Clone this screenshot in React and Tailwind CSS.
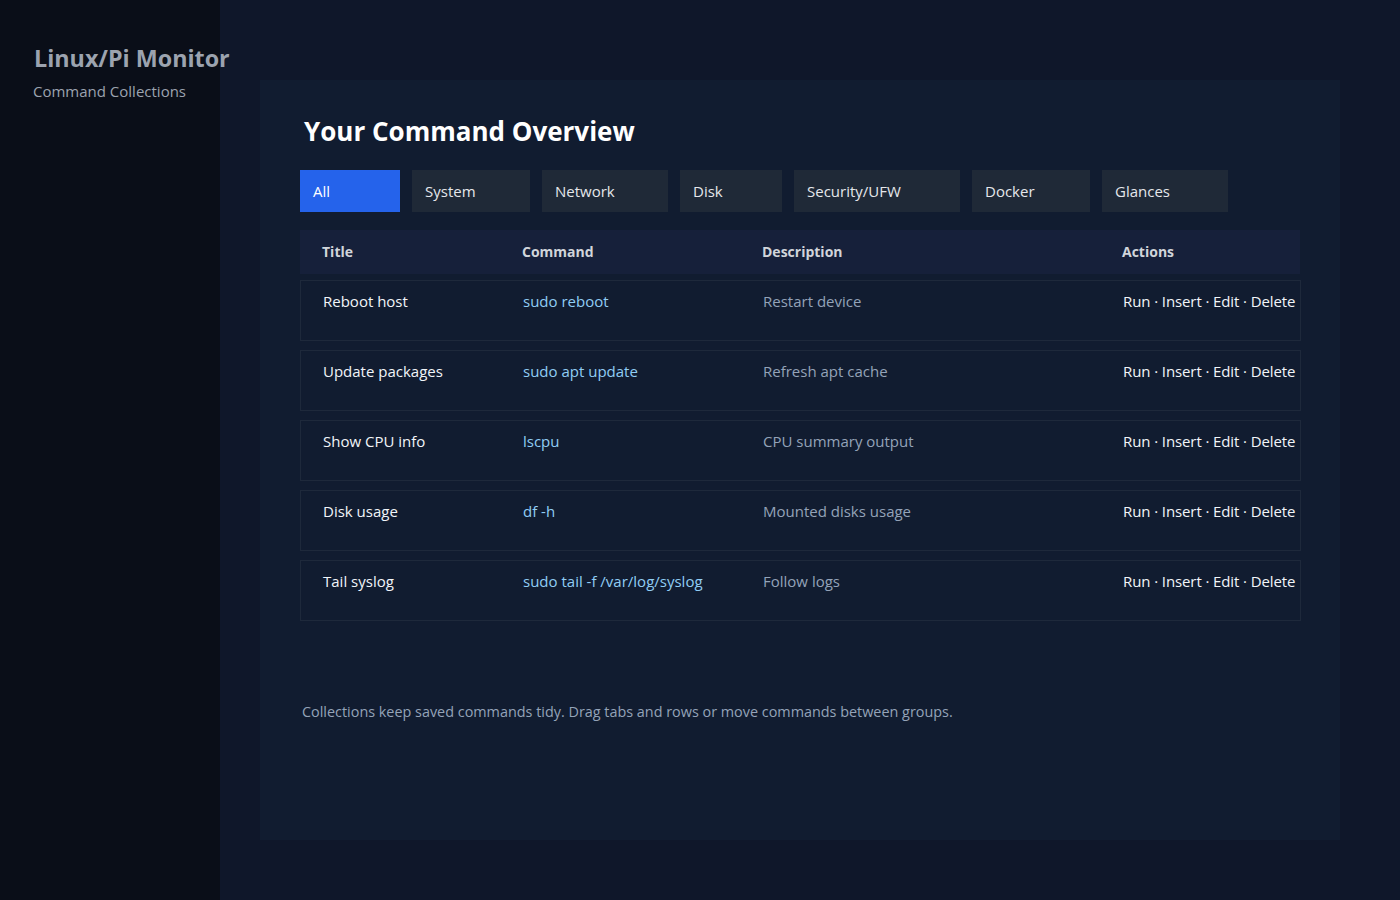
const tabs = [
  { label: 'All', w: 'w-[100px]', active: true },
  { label: 'System', w: 'w-[118px]' },
  { label: 'Network', w: 'w-[126px]' },
  { label: 'Disk', w: 'w-[102px]' },
  { label: 'Security/UFW', w: 'w-[166px]' },
  { label: 'Docker', w: 'w-[118px]' },
  { label: 'Glances', w: 'w-[126px]' },
]

const commands = [
  { title: 'Reboot host', cmd: 'sudo reboot', desc: 'Restart device' },
  { title: 'Update packages', cmd: 'sudo apt update', desc: 'Refresh apt cache' },
  { title: 'Show CPU info', cmd: 'lscpu', desc: 'CPU summary output' },
  { title: 'Disk usage', cmd: 'df -h', desc: 'Mounted disks usage' },
  { title: 'Tail syslog', cmd: 'sudo tail -f /var/log/syslog', desc: 'Follow logs' },
]

function App() {
  return (
    <div className="min-h-screen flex bg-[#0f172a] font-['Open_Sans',sans-serif]">
      {/* Sidebar */}
      <aside className="w-[220px] shrink-0 bg-[#0a0e18] pl-[34px] pt-[41px]">
        <h1 className="text-[23.3px] font-bold text-[#9ca3af] leading-[34px] whitespace-nowrap">Linux/Pi Monitor</h1>
        <div className="text-[15px] text-[#9ca3af] mt-[5px] -ml-px whitespace-nowrap">Command Collections</div>
      </aside>

      {/* Main */}
      <main className="flex-1 pl-[40px] pt-[80px] pb-[60px]">
        <section className="bg-[#111c30] w-[1080px] h-[760px] p-[40px] pt-[31px]">
          <h2 className="text-[26px] font-bold text-white leading-[40px] pl-[4px]">Your Command Overview</h2>

          {/* Tabs */}
          <div className="flex gap-[12px] mt-[19px]">
            {tabs.map((t) => (
              <div
                key={t.label}
                className={`${t.w} h-[42px] flex items-center px-[13px] text-[15px] ${
                  t.active ? 'bg-[#2563eb] text-white' : 'bg-[#1f2937] text-[#e5e7eb]'
                }`}
              >
                {t.label}
              </div>
            ))}
          </div>

          {/* Table header */}
          <div className="mt-[18px] h-[44px] bg-[#16203a] flex items-center pl-[22px] pb-[2px] text-[14px] font-bold text-[#d1d5db]">
            <div className="w-[200px]">Title</div>
            <div className="w-[240px]">Command</div>
            <div className="w-[360px]">Description</div>
            <div>Actions</div>
          </div>

          {/* Rows */}
          <div className="mt-[6px] flex flex-col gap-[9px]">
            {commands.map((c) => (
              <div key={c.title} className="h-[61px] w-[1001px] border border-[#1e293b] flex items-start pl-[22px] pt-[9px] text-[15px]">
                <div className="w-[200px] text-[#f1f5f9]">{c.title}</div>
                <div className="w-[240px] text-[#90cdf4] whitespace-nowrap">{c.cmd}</div>
                <div className="w-[360px] text-[#94a3b8]">{c.desc}</div>
                <div className="text-[#f1f5f9] whitespace-nowrap tracking-[-0.1px]">Run · Insert · Edit · Delete</div>
              </div>
            ))}
          </div>

          <p className="mt-[80px] pl-[2px] text-[14.4px] text-[#94a3b8]">
            Collections keep saved commands tidy. Drag tabs and rows or move commands between groups.
          </p>
        </section>
      </main>
    </div>
  )
}

export default App
